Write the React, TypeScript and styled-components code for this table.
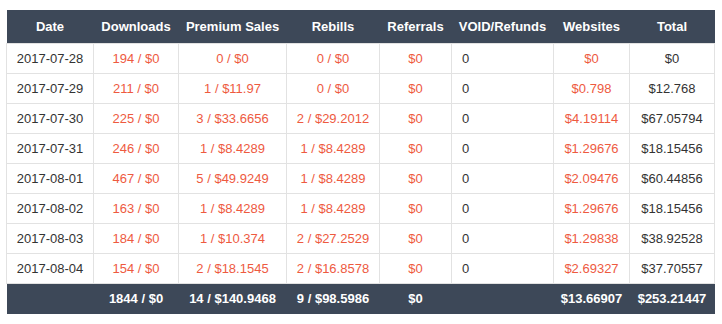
import React from "react";
import styled, { createGlobalStyle } from "styled-components";

const Global = createGlobalStyle`
  html, body { margin: 0; padding: 0; background: #ffffff; }
  body { font-family: "Liberation Sans", Arial, sans-serif; }
`;

const Wrap = styled.div`
  padding: 10px 8px 0 6px;
`;

const Table = styled.table`
  width: 708px;
  border-collapse: collapse;
  table-layout: fixed;
  font-family: "Liberation Sans", Arial, sans-serif;
  font-size: 13px;
`;

const HeadRow = styled.tr`
  background: #3d4858;
  height: 33px;
`;

const Th = styled.th`
  color: #ffffff;
  font-weight: bold;
  text-align: center;
  padding: 0 4px;
  white-space: nowrap;
`;

const BodyRow = styled.tr`
  height: 30px;
`;

const Td = styled.td<{ $red?: boolean; $left?: boolean }>`
  border: 1px solid #e2e2e2;
  color: ${(p) => (p.$red ? "#ee5a3f" : "#333333")};
  text-align: ${(p) => (p.$left ? "left" : "center")};
  padding: ${(p) => (p.$left ? "0 0 0 10px" : "0 4px")};
  white-space: nowrap;
`;

const FootRow = styled.tr`
  background: #3d4858;
  height: 31px;
`;

const Tf = styled.td`
  color: #ffffff;
  font-weight: bold;
  text-align: center;
  padding: 0 4px;
  white-space: nowrap;
`;

const widths = [87, 85, 108, 93, 72, 102, 76, 85];
const headers = ["Date", "Downloads", "Premium Sales", "Rebills", "Referrals", "VOID/Refunds", "Websites", "Total"];

const rows = [
  ["2017-07-28", "194 / $0", "0 / $0", "0 / $0", "$0", "0", "$0", "$0"],
  ["2017-07-29", "211 / $0", "1 / $11.97", "0 / $0", "$0", "0", "$0.798", "$12.768"],
  ["2017-07-30", "225 / $0", "3 / $33.6656", "2 / $29.2012", "$0", "0", "$4.19114", "$67.05794"],
  ["2017-07-31", "246 / $0", "1 / $8.4289", "1 / $8.4289", "$0", "0", "$1.29676", "$18.15456"],
  ["2017-08-01", "467 / $0", "5 / $49.9249", "1 / $8.4289", "$0", "0", "$2.09476", "$60.44856"],
  ["2017-08-02", "163 / $0", "1 / $8.4289", "1 / $8.4289", "$0", "0", "$1.29676", "$18.15456"],
  ["2017-08-03", "184 / $0", "1 / $10.374", "2 / $27.2529", "$0", "0", "$1.29838", "$38.92528"],
  ["2017-08-04", "154 / $0", "2 / $18.1545", "2 / $16.8578", "$0", "0", "$2.69327", "$37.70557"],
];

const totals = ["", "1844 / $0", "14 / $140.9468", "9 / $98.5986", "$0", "", "$13.66907", "$253.21447"];

export default function App() {
  return (
    <>
      <Global />
      <Wrap>
        <Table>
          <colgroup>
            {widths.map((w, i) => (
              <col key={i} style={{ width: w }} />
            ))}
          </colgroup>
          <thead>
            <HeadRow>
              {headers.map((h) => (
                <Th key={h}>{h}</Th>
              ))}
            </HeadRow>
          </thead>
          <tbody>
            {rows.map((r) => (
              <BodyRow key={r[0]}>
                {r.map((c, i) => (
                  <Td key={i} $red={i >= 1 && i <= 4 || i === 6} $left={i === 5}>
                    {c}
                  </Td>
                ))}
              </BodyRow>
            ))}
          </tbody>
          <tfoot>
            <FootRow>
              {totals.map((t, i) => (
                <Tf key={i}>{t}</Tf>
              ))}
            </FootRow>
          </tfoot>
        </Table>
      </Wrap>
    </>
  );
}
